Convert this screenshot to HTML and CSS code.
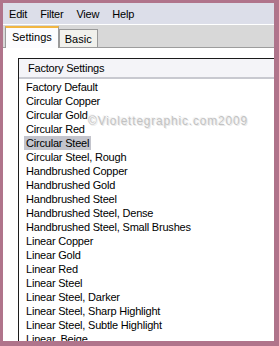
FILE: index.html
```html
<!DOCTYPE html>
<html lang="en">
<head>
    <meta charset="UTF-8">
    <title>Settings</title>
    <link rel="stylesheet" href="styles.css">
</head>
<body>
    <div class="window">
        <div class="menubar">
            <span class="menu-item">Edit</span>
            <span class="menu-item">Filter</span>
            <span class="menu-item">View</span>
            <span class="menu-item">Help</span>
        </div>

        <div class="tabstrip">
            <div class="tab active">Settings</div>
            <div class="tab">Basic</div>
        </div>

        <div class="panel">
            <div class="listbox">
                <div class="list-header">Factory Settings</div>
                <ul class="list">
                    <li><span>Factory Default</span></li>
                    <li><span>Circular Copper</span></li>
                    <li><span>Circular Gold</span></li>
                    <li><span>Circular Red</span></li>
                    <li class="selected"><span>Circular Steel</span></li>
                    <li><span>Circular Steel, Rough</span></li>
                    <li><span>Handbrushed Copper</span></li>
                    <li><span>Handbrushed Gold</span></li>
                    <li><span>Handbrushed Steel</span></li>
                    <li><span>Handbrushed Steel, Dense</span></li>
                    <li><span>Handbrushed Steel, Small Brushes</span></li>
                    <li><span>Linear Copper</span></li>
                    <li><span>Linear Gold</span></li>
                    <li><span>Linear Red</span></li>
                    <li><span>Linear Steel</span></li>
                    <li><span>Linear Steel, Darker</span></li>
                    <li><span>Linear Steel, Sharp Highlight</span></li>
                    <li><span>Linear Steel, Subtle Highlight</span></li>
                    <li><span>Linear, Beige</span></li>
                </ul>
            </div>
            <div class="watermark">©Violettegraphic.com2009</div>
        </div>
    </div>
</body>
</html>
```

FILE: styles.css
```css
body {
    margin: 0;
    background: #b0748b;
    font-family: "Liberation Sans", Arial, sans-serif;
    font-size: 11px;
    letter-spacing: -0.2px;
    color: #000;
}

.window {
    margin: 3px 5px 5px 3px;
    height: 338px;
    background: #fff;
    overflow: hidden;
}

.menubar {
    display: flex;
    height: 21px;
    align-items: center;
    padding-left: 6px;
    gap: 13px;
    background: #dcdee9;
    border-bottom: 1px solid #fff;
    font-size: 11px;
}

.tabstrip {
    display: flex;
    align-items: flex-end;
    height: 22px;
    padding-left: 2px;
    background: #d8d8d8;
    border-bottom: 1px solid #9d9d9d;
}

.tab {
    height: 17px;
    padding: 0 5px;
    line-height: 18px;
    background: #f1f1ec;
    border: 1px solid #9a9a9a;
    border-bottom: none;
    letter-spacing: 0;
}

.tab.active {
    height: 20px;
    margin-bottom: -1px;
    padding: 0 6px;
    line-height: 18px;
    background: #fcfcfe;
    border-top: 2px solid #f1b643;
}

.panel {
    position: relative;
    padding: 10px 0 0 15px;
}

.listbox {
    width: 300px;
    border-top: 1px solid #1c1c1c;
    border-left: 1px solid #1c1c1c;
}

.list-header {
    height: 18px;
    padding-left: 9px;
    line-height: 19px;
    background: #f4f4f8;
    border-bottom: 2px solid #c8c9d0;
}

.list {
    margin: 0;
    padding: 1px 0 0 5px;
    list-style: none;
}

.list li {
    height: 14px;
    line-height: 14px;
}

.list li span {
    padding: 0 2px;
}

.list li.selected span {
    display: inline-block;
    background: #c3c4cc;
}

.watermark {
    position: absolute;
    top: 66px;
    left: 85px;
    font-size: 12px;
    letter-spacing: 0.8px;
    color: #c2c2c2;
    text-shadow: 1px 1px 0 #e9e9e9, -1px -1px 0 #f4f4f4;
}
```
